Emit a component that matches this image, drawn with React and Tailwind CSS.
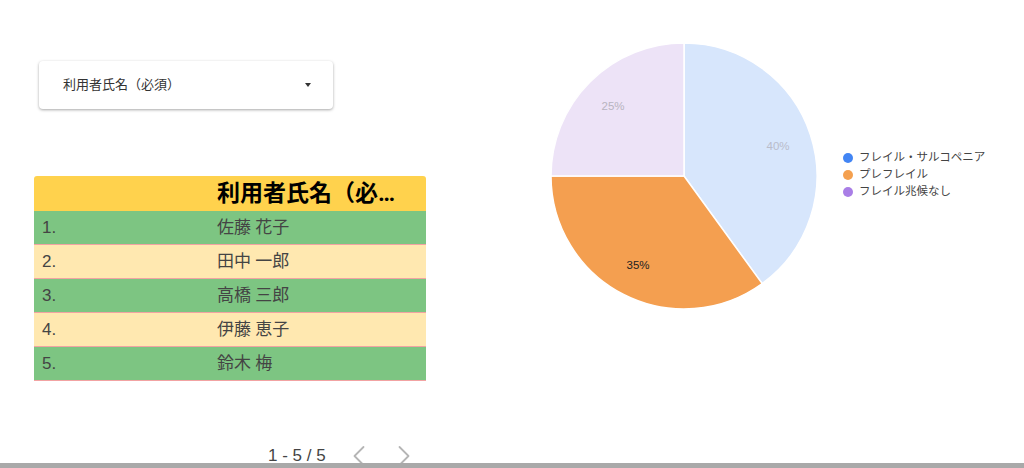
import { ChevronLeft, ChevronRight } from "lucide-react";

const rows = ["佐藤 花子", "田中 一郎", "高橋 三郎", "伊藤 恵子", "鈴木 梅"];

const legend = [
	{ label: "フレイル・サルコペニア", color: "bg-[#4285f4]" },
	{ label: "プレフレイル", color: "bg-[#f4a04f]" },
	{ label: "フレイル兆候なし", color: "bg-[#a97ee6]" },
];

function PieChart() {
	return (
		<svg width="270" height="270" viewBox="0 0 270 270">
			<path d="M135 135 L135 2 A133 133 0 0 1 213.18 242.6 Z" fill="#d7e6fc" stroke="#fff" strokeWidth="1.5" />
			<path d="M135 135 L213.18 242.6 A133 133 0 0 1 2 135 Z" fill="#f49f50" stroke="#fff" strokeWidth="1.5" />
			<path d="M135 135 L2 135 A133 133 0 0 1 135 2 Z" fill="#ede3f7" stroke="#fff" strokeWidth="1.5" />
			<text x="229" y="109" fontSize="11.5" fill="#b9bccb" textAnchor="middle" fontFamily="Liberation Sans, Arial, sans-serif">40%</text>
			<text x="89" y="228" fontSize="11.5" fill="#222" textAnchor="middle" fontFamily="Liberation Sans, Arial, sans-serif">35%</text>
			<text x="64" y="69" fontSize="11.5" fill="#b8b4c0" textAnchor="middle" fontFamily="Liberation Sans, Arial, sans-serif">25%</text>
		</svg>
	);
}

export default function App() {
	return (
		<div className="w-[1024px] h-[468px] flex flex-col overflow-hidden bg-white font-['Roboto','Noto_Sans_CJK_JP',sans-serif]">
			<div className="flex h-[463px]">
				{/* left: selector + table */}
				<div className="w-[549px] flex flex-col">
					<div className="ml-[39px] mt-[61px] w-[294px] h-[48px] flex items-center justify-between pl-[24px] pr-[22px] rounded bg-white shadow-[0_1px_3px_rgba(0,0,0,0.35)]">
						<span className="text-[13px] text-[#333]">利用者氏名（必須）</span>
						<span className="w-0 h-0 border-l-[3px] border-r-[3px] border-t-[4px] border-l-transparent border-r-transparent border-t-[#333]"></span>
					</div>

					<div className="ml-[34px] mt-[67px] w-[392px]">
						<div className="h-[35px] flex items-center bg-[#ffd24d] rounded-t-[3px]">
							<span className="ml-[183px] w-[194px] truncate text-[23px] leading-[30px] font-bold text-black">利用者氏名（必須）</span>
						</div>
						{rows.map((name, i) => (
							<div
								key={name}
								className={`h-[34px] flex items-center border-b border-[#f2a3a3] text-[17px] text-[#444] ${
									i % 2 === 0 ? "bg-[#7dc582]" : "bg-[#ffe8b0]"
								}`}
							>
								<span className="w-[183px] pl-[8px] font-['Liberation_Sans',sans-serif]">{i + 1}.</span>
								<span>{name}</span>
							</div>
						))}
					</div>

					<div className="mt-auto flex items-center ml-[268px] mb-[-11px]">
						<span className="text-[17px] text-[#444] font-['Liberation_Sans',sans-serif]">1 - 5 / 5</span>
						<ChevronLeft className="ml-[15px] w-[36px] h-[36px] text-[#b5b5b5]" strokeWidth={1.2} />
						<ChevronRight className="ml-[9px] w-[36px] h-[36px] text-[#b5b5b5]" strokeWidth={1.2} />
					</div>
				</div>

				{/* right: pie + legend */}
				<div className="pt-[41px]">
					<PieChart />
				</div>
				<div className="ml-[24px] mt-[151px] flex flex-col gap-[3px]">
					{legend.map((l) => (
						<div key={l.label} className="flex items-center gap-[6px] h-[14px]">
							<span className={`w-[10px] h-[10px] rounded-full ${l.color}`}></span>
							<span className="text-[11.5px] text-[#444]">{l.label}</span>
						</div>
					))}
				</div>
			</div>
			<div className="h-[5px] bg-[#a9a9a9]"></div>
		</div>
	);
}
